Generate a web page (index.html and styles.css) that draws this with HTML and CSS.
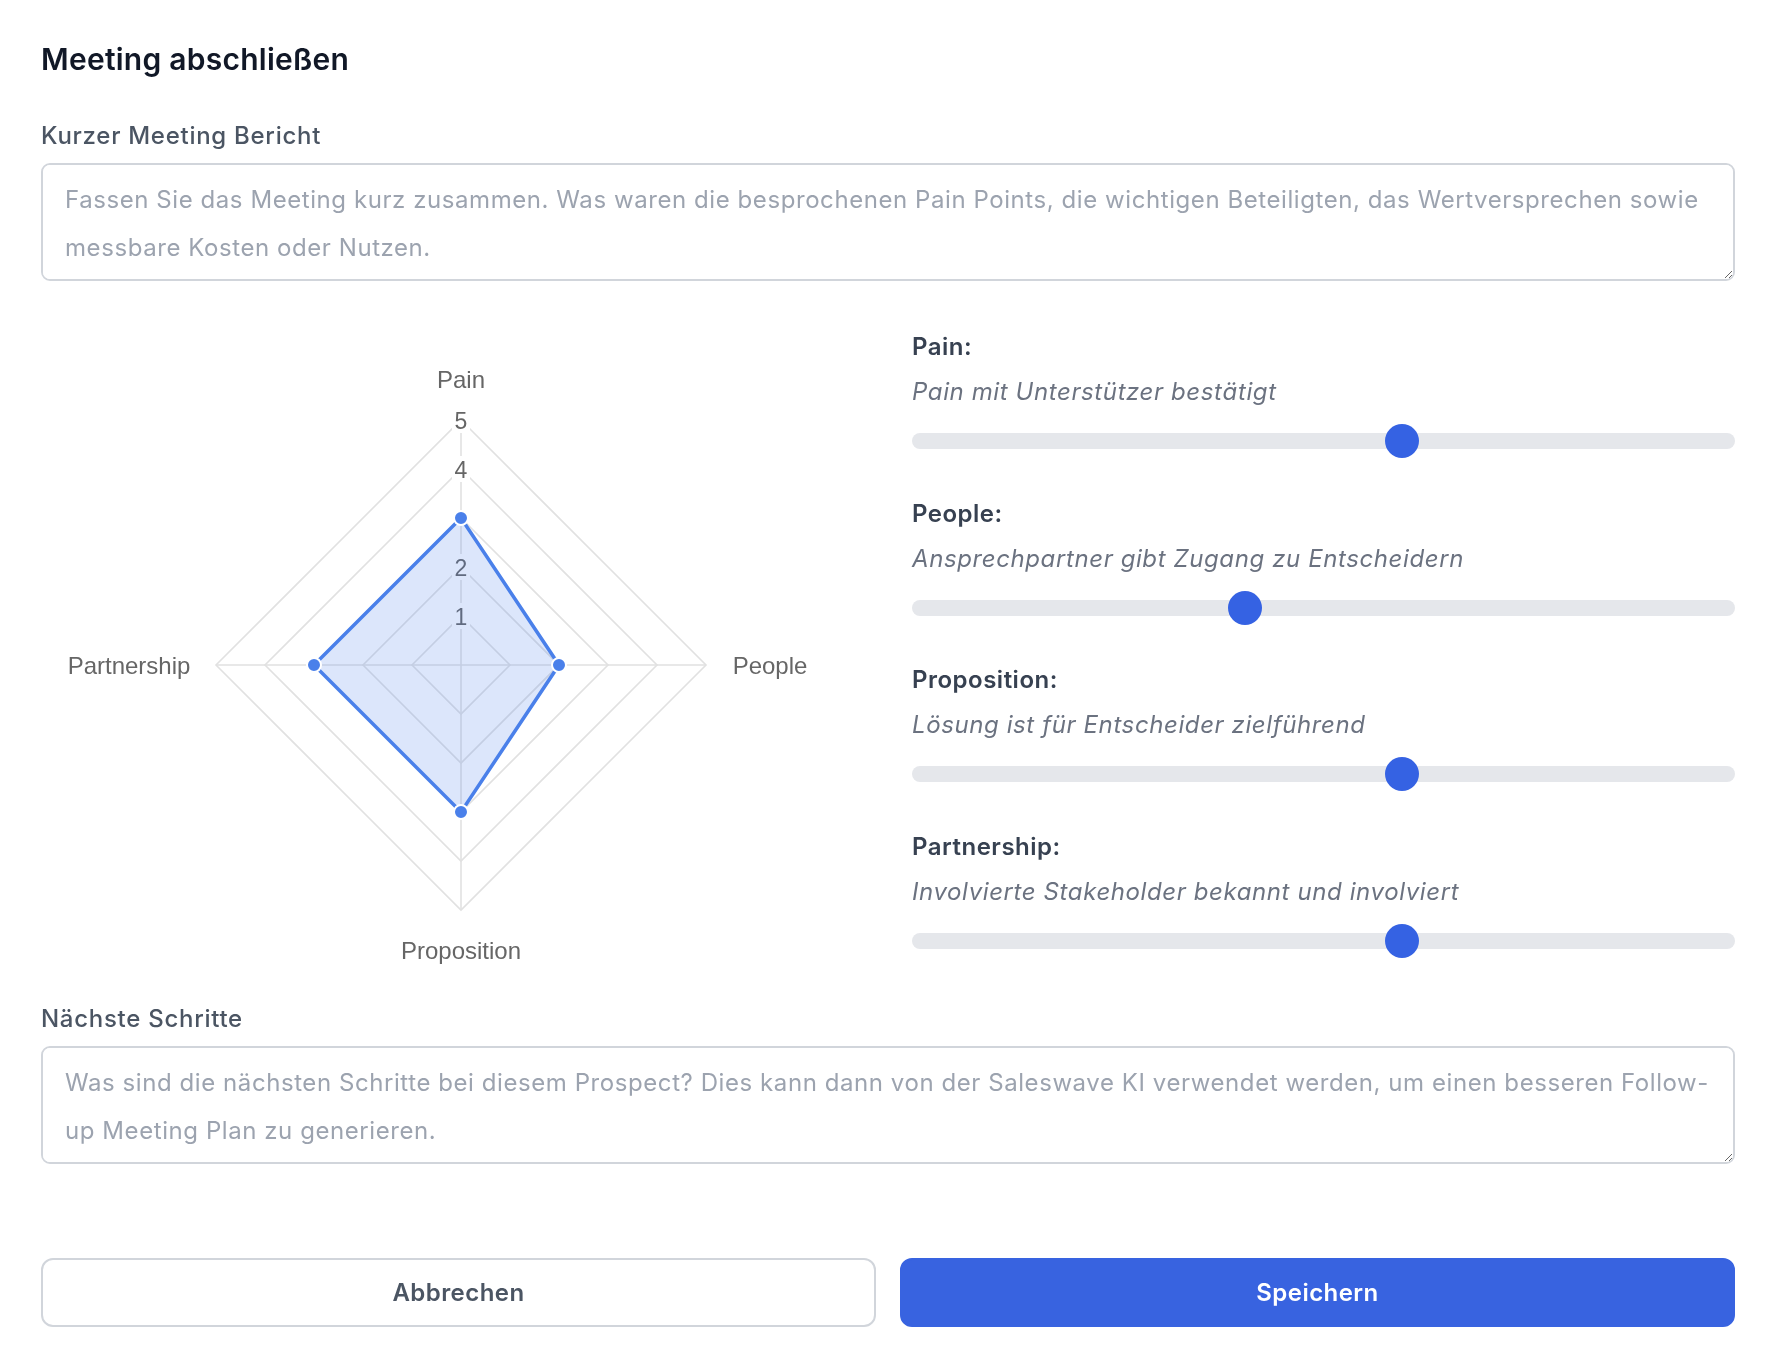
FILE: index.html
```html
<!DOCTYPE html>
<html lang="de">
<head>
    <meta charset="UTF-8">
    <meta name="viewport" content="width=device-width, initial-scale=1.0">
    <title>Meeting abschließen</title>
    <link rel="stylesheet" href="styles.css">
</head>
<body>

    <div class="modal">
        <h2 class="title">Meeting abschließen</h2>

        <label class="field-label" for="report">Kurzer Meeting Bericht</label>
        <textarea class="field" id="report" rows="2" placeholder="Fassen Sie das Meeting kurz zusammen. Was waren die besprochenen Pain Points, die wichtigen Beteiligten, das Wertversprechen sowie messbare Kosten oder Nutzen."></textarea>

        <div class="score-grid">
            <!-- Radar chart: 5 rings, 49px per step -->
            <div class="chart-col">
                <svg class="radar" viewBox="0 0 823 640">
                    <g class="grid">
                        <polygon points="420,289 469,338 420,387 371,338"/>
                        <polygon points="420,240 518,338 420,436 322,338"/>
                        <polygon points="420,191 567,338 420,485 273,338"/>
                        <polygon points="420,142 616,338 420,534 224,338"/>
                        <polygon points="420,93 665,338 420,583 175,338"/>
                        <line x1="420" y1="338" x2="420" y2="93"/>
                        <line x1="420" y1="338" x2="665" y2="338"/>
                        <line x1="420" y1="338" x2="420" y2="583"/>
                        <line x1="420" y1="338" x2="175" y2="338"/>
                    </g>
                    <g class="ticks">
                        <rect x="411" y="80" width="18" height="26"/>
                        <rect x="411" y="129" width="18" height="26"/>
                        <rect x="411" y="227" width="18" height="26"/>
                        <rect x="411" y="276" width="18" height="26"/>
                        <text x="420" y="101.5">5</text>
                        <text x="420" y="150.5">4</text>
                        <text x="420" y="248.5">2</text>
                        <text x="420" y="297.5">1</text>
                    </g>
                    <polygon class="area" points="420,191 518,338 420,485 273,338"/>
                    <g class="points">
                        <circle cx="420" cy="191" r="7"/>
                        <circle cx="518" cy="338" r="7"/>
                        <circle cx="420" cy="485" r="7"/>
                        <circle cx="273" cy="338" r="7"/>
                    </g>
                    <g class="axis-labels">
                        <text x="420" y="60.5">Pain</text>
                        <text x="729" y="346.5">People</text>
                        <text x="420" y="631.5">Proposition</text>
                        <text x="88" y="346.5">Partnership</text>
                    </g>
                </svg>
            </div>

            <div class="slider-col">
                <div class="slider-group">
                    <p class="slider-name">Pain:</p>
                    <p class="slider-hint">Pain mit Unterstützer bestätigt</p>
                    <input type="range" min="0" max="5" step="1" value="3">
                </div>
                <div class="slider-group">
                    <p class="slider-name">People:</p>
                    <p class="slider-hint">Ansprechpartner gibt Zugang zu Entscheidern</p>
                    <input type="range" min="0" max="5" step="1" value="2">
                </div>
                <div class="slider-group">
                    <p class="slider-name">Proposition:</p>
                    <p class="slider-hint">Lösung ist für Entscheider zielführend</p>
                    <input type="range" min="0" max="5" step="1" value="3">
                </div>
                <div class="slider-group">
                    <p class="slider-name">Partnership:</p>
                    <p class="slider-hint">Involvierte Stakeholder bekannt und involviert</p>
                    <input type="range" min="0" max="5" step="1" value="3">
                </div>
            </div>
        </div>

        <label class="field-label next" for="steps">Nächste Schritte</label>
        <textarea class="field" id="steps" rows="2" placeholder="Was sind die nächsten Schritte bei diesem Prospect? Dies kann dann von der Saleswave KI verwendet werden, um einen besseren Follow-up Meeting Plan zu generieren."></textarea>

        <div class="actions">
            <button type="button" class="btn btn-cancel">Abbrechen</button>
            <button type="button" class="btn btn-save">Speichern</button>
        </div>
    </div>

</body>
</html>
```

FILE: styles.css
```css
/* Basic Reset */
* {
    margin: 0;
    padding: 0;
    box-sizing: border-box;
}

body {
    font-family: Inter, "Noto Sans", sans-serif;
    background-color: #ffffff;
    color: #111827;
}

.modal {
    padding: 38px 41px 42px;
}

.title {
    font-size: 30px;
    line-height: 42px;
    font-weight: 600;
    letter-spacing: 0.25px;
    color: #111827;
}

.field-label {
    display: block;
    margin-top: 38px;
    margin-bottom: 9px;
    font-size: 24px;
    line-height: 36px;
    font-weight: 500;
    letter-spacing: 0.72px;
    color: #4b5563;
}

.field-label.next {
    margin-top: 34px;
}

.field {
    display: block;
    width: 100%;
    height: 118px;
    padding: 11px 22px 9px;
    border: 2px solid #d1d5db;
    border-radius: 9px;
    font-family: inherit;
    font-size: 24px;
    line-height: 48px;
    letter-spacing: 0.57px;
    color: #111827;
    background: #ffffff;
}

.field::placeholder {
    color: #9ca3af;
}

/* Score section */
.score-grid {
    display: grid;
    grid-template-columns: 1fr 1fr;
    gap: 48px;
    margin-top: 46px;
    align-items: start;
}

.radar {
    display: block;
    width: 100%;
    height: auto;
    overflow: visible;
}

.radar .grid polygon,
.radar .grid line {
    fill: none;
    stroke: #e1e1e1;
    stroke-width: 1.6;
}

.radar .ticks rect {
    fill: #ffffff;
}

.radar text {
    font-family: "Liberation Sans", Arial, sans-serif;
    fill: #666666;
    text-anchor: middle;
}

.radar .ticks text {
    font-size: 23px;
}

.radar .axis-labels text {
    font-size: 24px;
}

.radar .area {
    fill: rgba(80, 130, 235, 0.2);
    stroke: #4a80ea;
    stroke-width: 3.5;
    stroke-linejoin: round;
}

.radar .points circle {
    fill: #4a80ea;
    stroke: #ffffff;
    stroke-width: 2;
}

.slider-col {
    display: flex;
    flex-direction: column;
    gap: 37.5px;
    padding-top: 2px;
}

.slider-name {
    font-size: 24px;
    line-height: 36px;
    font-weight: 600;
    letter-spacing: 0.5px;
    color: #374151;
}

.slider-hint {
    margin-top: 9px;
    font-size: 24px;
    line-height: 36px;
    font-style: italic;
    letter-spacing: 0.6px;
    color: #6b7280;
}

input[type="range"] {
    display: block;
    width: 100%;
    height: 34px;
    margin-top: 14px;
    -webkit-appearance: none;
    appearance: none;
    background: transparent;
    cursor: pointer;
}

input[type="range"]::-webkit-slider-runnable-track {
    height: 16px;
    background: #e5e7eb;
    border-radius: 8px;
}

input[type="range"]::-webkit-slider-thumb {
    -webkit-appearance: none;
    width: 34px;
    height: 34px;
    margin-top: -9px;
    border: none;
    border-radius: 50%;
    background: #3562e3;
}

/* Buttons */
.actions {
    display: grid;
    grid-template-columns: 1fr 1fr;
    gap: 24px;
    margin-top: 94px;
}

.btn {
    height: 69px;
    border-radius: 12px;
    font-family: inherit;
    font-size: 24px;
    font-weight: 600;
    letter-spacing: 0.45px;
    cursor: pointer;
}

.btn-cancel {
    background: #ffffff;
    border: 2px solid #d1d5db;
    color: #4b5563;
}

.btn-save {
    background: #3863e0;
    border: 2px solid #3863e0;
    color: #ffffff;
}
```
